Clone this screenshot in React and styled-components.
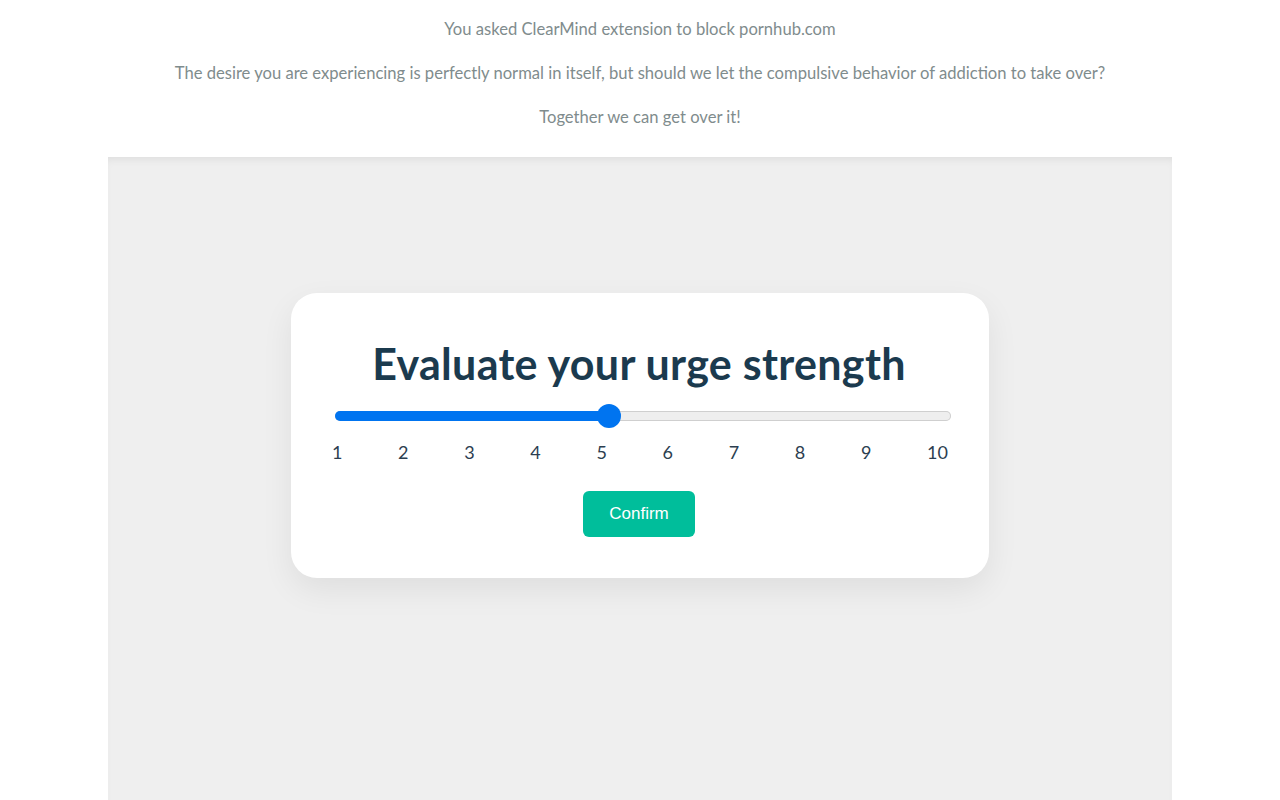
import React, { useState } from "react";
import styled, { createGlobalStyle } from "styled-components";

const GlobalStyle = createGlobalStyle`
  html, body {
    margin: 0;
    padding: 0;
    background: #ffffff;
    font-family: Lato, "Open Sans", sans-serif;
  }
`;

const Header = styled.div`
  padding: 15px 0 26px;
  text-align: center;
`;

const Line = styled.p`
  margin: 0 0 16px;
  line-height: 28px;
  font-size: 16.6px;
  color: #7f8c8d;
  &:last-child {
    margin-bottom: 0;
  }
`;

const Panel = styled.div`
  width: 1064px;
  margin: 0 auto;
  min-height: 643px;
  background: #efefef;
  box-shadow: inset 0 6px 8px -4px rgba(0, 0, 0, 0.08);
  padding-top: 136px;
  box-sizing: border-box;
`;

const Card = styled.div`
  width: 698px;
  margin: 0 auto;
  box-sizing: border-box;
  background: #ffffff;
  border-radius: 26px;
  padding: 46px 41px 41px;
  box-shadow: 0 12px 32px rgba(0, 0, 0, 0.07);
  display: flex;
  flex-direction: column;
  align-items: center;
`;

const Title = styled.h1`
  margin: 0 0 0 -2px;
  font-size: 43px;
  line-height: 50px;
  letter-spacing: 0.3px;
  font-weight: 700;
  color: #1b3a4e;
`;

const Slider = styled.div`
  position: relative;
  width: 616px;
  height: 10px;
  margin: 22px 0 0 6px;
  border-radius: 5px;
  background: #eeeeee;
  box-shadow: inset 0 0 0 1px #cfcfcf;
  cursor: pointer;
`;

const Fill = styled.div`
  height: 100%;
  border-radius: 5px;
  background: #0074f0;
`;

const Thumb = styled.div`
  position: absolute;
  top: 50%;
  width: 24px;
  height: 24px;
  border-radius: 50%;
  background: #0074f0;
  transform: translate(-50%, -50%);
`;

const Labels = styled.div`
  width: 616px;
  display: flex;
  justify-content: space-between;
  margin-top: 19px;
`;

const Label = styled.span`
  font-size: 18px;
  line-height: 24px;
  color: #2c3e50;
  cursor: pointer;
`;

const ConfirmButton = styled.button`
  margin: 27px 0 0 -2px;
  width: 112px;
  height: 46px;
  border: none;
  border-radius: 6px;
  background: #00be9b;
  color: #ffffff;
  font-family: "Liberation Sans", Arial, sans-serif;
  font-size: 17px;
  cursor: pointer;
`;

const App = () => {
  const [value, setValue] = useState(5);
  const pct = ((value - 1) / 9) * 100;

  return (
    <>
      <GlobalStyle />
      <Header>
        <Line>You asked ClearMind extension to block pornhub.com</Line>
        <Line>
          The desire you are experiencing is perfectly normal in itself, but should we let the
          compulsive behavior of addiction to take over?
        </Line>
        <Line>Together we can get over it!</Line>
      </Header>
      <Panel>
        <Card>
          <Title>Evaluate your urge strength</Title>
          <Slider>
            <Fill style={{ width: `${pct}%` }} />
            <Thumb style={{ left: `${pct}%` }} />
          </Slider>
          <Labels>
            {Array.from({ length: 10 }, (_, i) => (
              <Label key={i} onClick={() => setValue(i + 1)}>
                {i + 1}
              </Label>
            ))}
          </Labels>
          <ConfirmButton>Confirm</ConfirmButton>
        </Card>
      </Panel>
    </>
  );
};

export default App;
